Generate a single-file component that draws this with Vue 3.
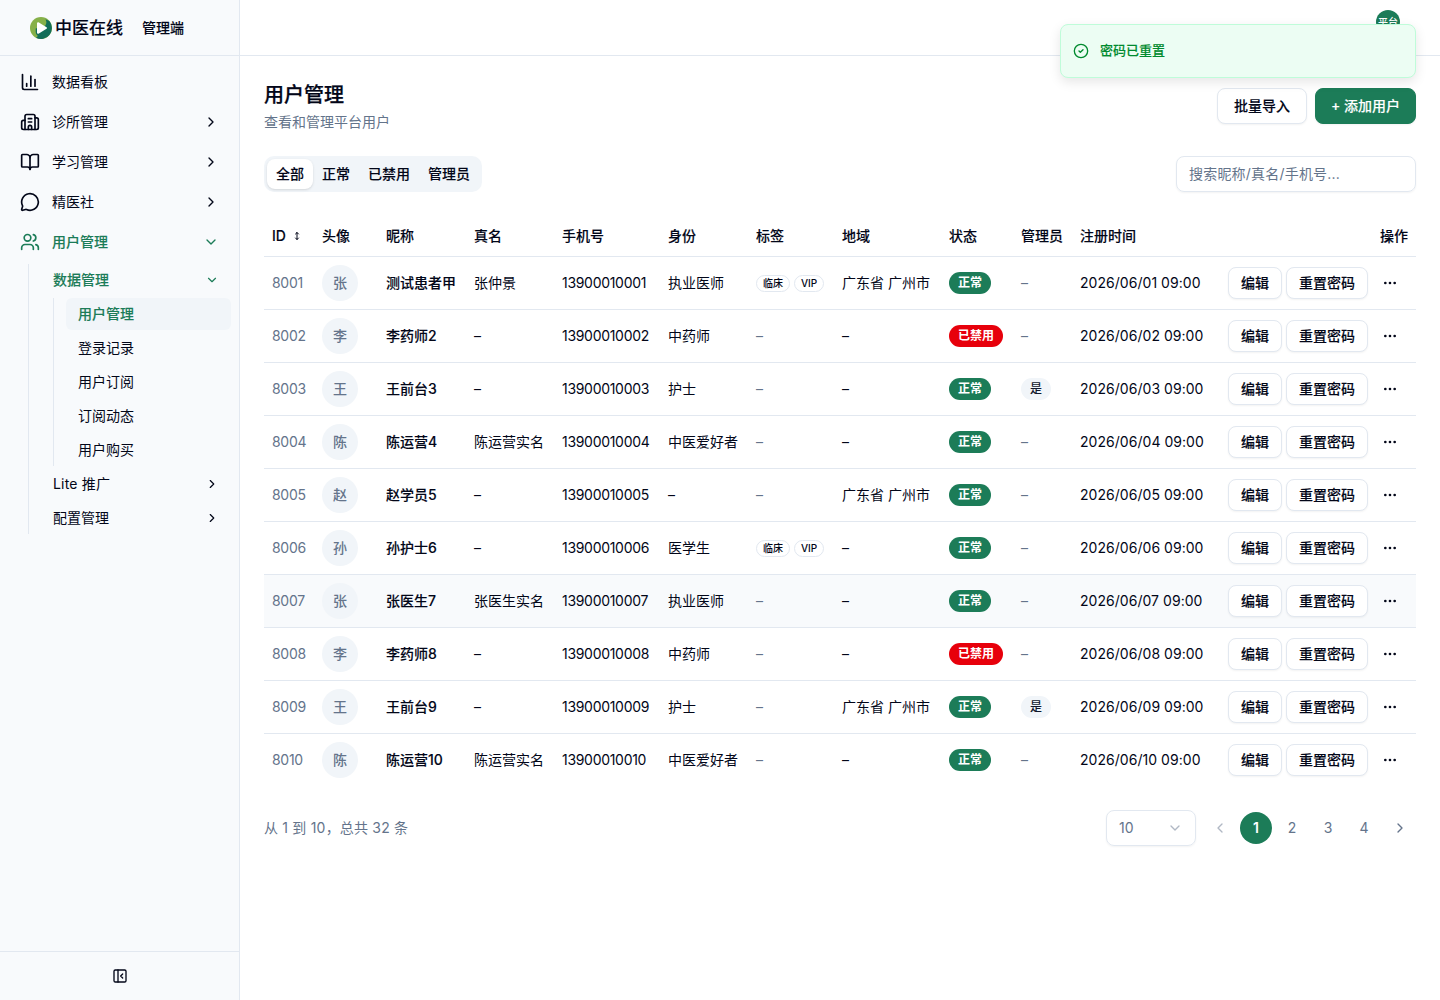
<script setup>
const menu = [
  { label: '数据看板', icon: 'chart' },
  { label: '诊所管理', icon: 'clinic', more: true },
  { label: '学习管理', icon: 'book', more: true },
  { label: '精医社', icon: 'chat', more: true },
]
const leaves = ['用户管理', '登录记录', '用户订阅', '订阅动态', '用户购买']
const icons = {
  chart: ['M3 3v16a2 2 0 0 0 2 2h16', 'M18 17V9', 'M13 17V5', 'M8 17v-3'],
  clinic: ['M10 12h4', 'M10 8h4', 'M14 21v-3a2 2 0 0 0-4 0v3', 'M6 10H4a2 2 0 0 0-2 2v7a2 2 0 0 0 2 2h16a2 2 0 0 0 2-2V9a2 2 0 0 0-2-2h-2', 'M6 21V5a2 2 0 0 1 2-2h8a2 2 0 0 1 2 2v16'],
  book: ['M12 7v14', 'M3 18a1 1 0 0 1-1-1V4a1 1 0 0 1 1-1h5a4 4 0 0 1 4 4 4 4 0 0 1 4-4h5a1 1 0 0 1 1 1v13a1 1 0 0 1-1 1h-6a3 3 0 0 0-3 3 3 3 0 0 0-3-3z'],
  chat: ['M2.992 16.342a2 2 0 0 1 .094 1.167l-1.065 3.29a1 1 0 0 0 1.236 1.168l3.413-.998a2 2 0 0 1 1.099.092 10 10 0 1 0-4.777-4.719'],
}
const tabs = ['全部', '正常', '已禁用', '管理员']
const heads = ['头像', '昵称', '真名', '手机号', '身份', '标签', '地域', '状态', '管理员', '注册时间']
const area = '广东省 广州市'
const rows = [
  { s: '张', name: '测试患者甲', real: '张仲景', job: '执业医师', tags: ['临床', 'VIP'], area },
  { s: '李', name: '李药师2', job: '中药师', banned: true },
  { s: '王', name: '王前台3', job: '护士', admin: true },
  { s: '陈', name: '陈运营4', real: '陈运营实名', job: '中医爱好者' },
  { s: '赵', name: '赵学员5', area },
  { s: '孙', name: '孙护士6', job: '医学生', tags: ['临床', 'VIP'] },
  { s: '张', name: '张医生7', real: '张医生实名', job: '执业医师', hover: true },
  { s: '李', name: '李药师8', job: '中药师', banned: true },
  { s: '王', name: '王前台9', job: '护士', area, admin: true },
  { s: '陈', name: '陈运营10', real: '陈运营实名', job: '中医爱好者' },
].map((r, i) => {
  const n = String(i + 1).padStart(2, '0')
  return { ...r, id: 8001 + i, phone: `139000100${n}`, date: `2026/06/${n} 09:00` }
})
</script>

<template>
  <div class="shell">
    <aside class="sidebar">
      <div class="brand">
        <svg class="logo" viewBox="0 0 22 22">
          <circle cx="11" cy="11" r="11" fill="#86b049" />
          <path d="M15.5 2.2Q18 3 19.6 4.2A11 11 0 0 1 6 20.8Q8 20 7.5 18.5Q5.7 17.5 5.7 15V11.5L15 9Q17.5 6 15.5 2.2Z" fill="#136e59" />
          <path d="M8 6.2v9.6l8-4.8z" fill="#fff" stroke="#fff" stroke-width="2" stroke-linejoin="round" />
        </svg>
        <span class="brand-name">中医在线</span>
        <span class="brand-sub">管理端</span>
      </div>
      <nav class="nav">
        <div v-for="m in menu" :key="m.label" class="item">
          <svg class="ico" viewBox="0 0 24 24"><path v-for="d in icons[m.icon]" :key="d" :d="d" /></svg>
          <span class="grow">{{ m.label }}</span>
          <svg v-if="m.more" class="chev" viewBox="0 0 24 24"><path d="m9 18 6-6-6-6" /></svg>
        </div>
        <div class="item green">
          <svg class="ico" viewBox="0 0 24 24">
            <path d="M16 21v-2a4 4 0 0 0-4-4H6a4 4 0 0 0-4 4v2" /><circle cx="9" cy="7" r="4" />
            <path d="M22 21v-2a4 4 0 0 0-3-3.87" /><path d="M16 3.13a4 4 0 0 1 0 7.75" />
          </svg>
          <span class="grow">用户管理</span>
          <svg class="chev" viewBox="0 0 24 24"><path d="m6 9 6 6 6-6" /></svg>
        </div>
        <div class="branch">
          <div class="sub green">
            <span class="grow">数据管理</span>
            <svg class="chev" viewBox="0 0 24 24"><path d="m6 9 6 6 6-6" /></svg>
          </div>
          <div class="leaves">
            <div v-for="(l, i) in leaves" :key="l" class="leaf" :class="{ on: i === 0 }">{{ l }}</div>
          </div>
          <div v-for="l in ['Lite 推广', '配置管理']" :key="l" class="sub" :class="{ latin: l[0] === 'L' }">
            <span class="grow">{{ l }}</span>
            <svg class="chev" viewBox="0 0 24 24"><path d="m9 18 6-6-6-6" /></svg>
          </div>
        </div>
      </nav>
      <div class="side-foot">
        <svg class="collapse" viewBox="0 0 24 24"><rect width="18" height="18" x="3" y="3" rx="2" /><path d="M9 3v18" /><path d="m16 15-3-3 3-3" /></svg>
      </div>
    </aside>

    <div class="main">
      <header class="top"><span class="me">平台</span></header>
      <main class="content">
        <div class="title-row">
          <div>
            <h1>用户管理</h1>
            <p class="desc">查看和管理平台用户</p>
          </div>
          <div class="actions">
            <button class="btn lg">批量导入</button>
            <button class="btn lg primary">+ 添加用户</button>
          </div>
        </div>
        <div class="filters">
          <div class="tabs">
            <span v-for="(t, i) in tabs" :key="t" class="tab" :class="{ on: i === 0 }">{{ t }}</span>
          </div>
          <div class="search">搜索昵称/真名/手机号...</div>
        </div>

        <table>
          <colgroup>
            <col class="c-id" /><col class="c-av" /><col class="c-nm" /><col class="c-nm" /><col class="c-ph" /><col class="c-nm" />
            <col class="c-tg" /><col class="c-ar" /><col class="c-st" /><col class="c-ad" /><col class="c-dt" /><col />
          </colgroup>
          <thead>
            <tr>
              <th>ID <svg class="sort" viewBox="0 0 6 10"><path d="M3 1.5v7M1.5 3 3 1.5 4.5 3M1.5 7 3 8.5 4.5 7" /></svg></th>
              <th v-for="h in heads" :key="h">{{ h }}</th>
              <th class="right">操作</th>
            </tr>
          </thead>
          <tbody>
            <tr v-for="r in rows" :key="r.id" :class="{ hover: r.hover }">
              <td class="muted num">{{ r.id }}</td>
              <td><span class="avatar">{{ r.s }}</span></td>
              <td class="name">{{ r.name }}</td>
              <td>{{ r.real || '–' }}</td>
              <td class="num">{{ r.phone }}</td>
              <td>{{ r.job || '–' }}</td>
              <td class="muted">
                <div v-if="r.tags" class="tags"><span v-for="t in r.tags" :key="t" class="tag">{{ t }}</span></div>
                <template v-else>–</template>
              </td>
              <td>{{ r.area || '–' }}</td>
              <td><span class="badge" :class="{ red: r.banned }">{{ r.banned ? '已禁用' : '正常' }}</span></td>
              <td class="muted"><span v-if="r.admin" class="badge soft">是</span><template v-else>–</template></td>
              <td class="date">{{ r.date }}</td>
              <td>
                <div class="ops">
                  <button class="btn">编辑</button><button class="btn">重置密码</button>
                  <span class="dots"><svg viewBox="0 0 24 24"><circle cx="5" cy="12" r="1" /><circle cx="12" cy="12" r="1" /><circle cx="19" cy="12" r="1" /></svg></span>
                </div>
              </td>
            </tr>
          </tbody>
        </table>

        <div class="pager">
          <span class="total">从 1 到 10，总共 32 条</span>
          <div class="pages">
            <div class="size"><span>10</span><svg class="chev" viewBox="0 0 24 24"><path d="m6 9 6 6 6-6" /></svg></div>
            <span class="pg off"><svg class="chev" viewBox="0 0 24 24"><path d="m15 18-6-6 6-6" /></svg></span>
            <span class="pg cur">1</span><span class="pg">2</span><span class="pg">3</span><span class="pg">4</span>
            <span class="pg"><svg class="chev" viewBox="0 0 24 24"><path d="m9 18 6-6-6-6" /></svg></span>
          </div>
        </div>
      </main>
    </div>

    <div class="toast">
      <svg viewBox="0 0 24 24"><circle cx="12" cy="12" r="10" /><path d="m9 12 2 2 4-4" /></svg>
      <span>密码已重置</span>
    </div>
  </div>
</template>

<style>
body { margin: 0; background: #fff; }
</style>

<style scoped>
* { box-sizing: border-box; }
.shell { display: flex; height: 1000px; overflow: hidden; position: relative; font: 400 14px/20px Inter, "Noto Sans CJK SC", sans-serif; color: #020618; }
svg { fill: none; stroke: currentColor; stroke-width: 2; stroke-linecap: round; stroke-linejoin: round; flex: none; display: block; }
.sidebar { width: 240px; flex: none; display: flex; flex-direction: column; background: #f8fafc; border-right: 1px solid #e2e8f0; }
.brand { height: 56px; flex: none; display: flex; align-items: center; border-bottom: 1px solid #e2e8f0; padding-left: 30px; }
.logo { width: 22px; height: 22px; stroke: none; }
.brand-name { font-size: 17px; font-weight: 500; margin-left: 3px; width: 68px; white-space: nowrap; }
.brand-sub { font-weight: 500; margin-left: 19px; }
.nav { flex: 1; padding: 8px 8px 0; }
.item { height: 36px; margin-bottom: 4px; display: flex; align-items: center; padding: 0 12px; gap: 12px; }
.ico { width: 20px; height: 20px; }
.grow { flex: 1; }
.chev { width: 16px; height: 16px; }
.green { color: #1c7c58; font-weight: 500; }
.branch { margin: 0 0 0 20px; border-left: 1px solid #e2e8f0; padding-left: 12px; }
.sub { height: 32px; margin-bottom: 2px; display: flex; align-items: center; padding: 0 12px; }
.sub.latin { letter-spacing: .2px; }
.sub .chev { width: 14px; height: 14px; }
.leaves { margin: 0 0 0 12px; border-left: 1px solid #e2e8f0; padding-left: 12px; }
.leaf { height: 32px; margin-bottom: 2px; padding: 6px 12px; border-radius: 6px; }
.leaf.on { background: #f1f5f9; color: #1c7c58; font-weight: 500; }
.side-foot { height: 49px; border-top: 1px solid #e2e8f0; display: flex; align-items: center; justify-content: center; }
.collapse { width: 16px; height: 16px; }
.main { flex: 1; min-width: 0; }
.top { height: 56px; border-bottom: 1px solid #e2e8f0; display: flex; justify-content: flex-end; padding: 10px 40px 0 0; }
.me { width: 24px; height: 24px; border-radius: 50%; background: #1c7c58; color: #fff; font-size: 10px; line-height: 24px; text-align: center; font-weight: 500; }
.content { padding: 24px; }
.title-row, .filters, .pager { display: flex; justify-content: space-between; align-items: center; }
.title-row { height: 52px; }
h1 { margin: 0; font-size: 20px; line-height: 28px; padding-top: 1px; margin-bottom: -1px; font-weight: 500; }
.desc { margin: 4px 0 0; color: #64748b; line-height: 20px; }
.actions { display: flex; gap: 8px; }
.btn { font: inherit; font-weight: 500; color: inherit; height: 32px; padding: 0 12px; border: 1px solid #e2e8f0; border-radius: 8px; background: #fff; box-shadow: 0 1px 2px rgba(0, 0, 0, .05); white-space: nowrap; }
.btn.lg { height: 36px; padding: 0 16px; }
.btn.lg.primary { background: #1c7c58; border-color: #1c7c58; color: #fff; padding: 0 15px; }
.brand-name, .brand-sub, .green span, .leaf.on, h1, .btn, .tabs, th, .name, .toast span { -webkit-text-stroke: .12px currentColor; }
h1 { -webkit-text-stroke-width: .25px; }
.filters { margin-top: 24px; height: 36px; }
.tabs { display: flex; height: 36px; padding: 3px; border-radius: 10px; background: #f1f5f9; font-weight: 500; }
.tab { padding: 5px 9px; border-radius: 8px; }
.tab.on { background: #fff; box-shadow: 0 1px 3px rgba(0, 0, 0, .1), 0 1px 2px -1px rgba(0, 0, 0, .1); }
.search { width: 240px; height: 36px; border: 1px solid #e2e8f0; border-radius: 8px; box-shadow: 0 1px 2px rgba(0, 0, 0, .05); padding: 7px 12px; color: #64748b; letter-spacing: .2px; }
table { margin-top: 24px; width: 100%; table-layout: fixed; border-collapse: separate; border-spacing: 0; }
.c-id { width: 50px; } .c-av { width: 64px; } .c-nm { width: 88px; } .c-ph { width: 106px; } .c-tg { width: 86px; }
.c-ar { width: 107px; } .c-st { width: 72px; } .c-ad { width: 59px; } .c-dt { width: 148px; }
th, td { padding: 0 8px; text-align: left; white-space: nowrap; border-bottom: 1px solid #e2e8f0; }
th { height: 41px; font-weight: 500; }
td { height: 53px; }
tbody tr:last-child td { border-bottom: 0; height: 52px; }
.hover td { background: #f8fafc; }
.right { text-align: right; }
.muted { color: #64748b; }
.num { letter-spacing: -.3px; }
.date { letter-spacing: .04px; }
.name { font-weight: 500; }
.sort { display: inline-block; width: 6px; height: 10px; stroke-width: 1; margin-left: 4px; }
.avatar { display: block; width: 36px; height: 36px; line-height: 36px; border-radius: 50%; background: #f1f5f9; color: #64748b; text-align: center; font-weight: 500; }
.tags { display: flex; gap: 4px; }
.tag { height: 17px; border: 1px solid #e2e8f0; border-radius: 9px; padding: 0 6px; font-size: 10px; line-height: 15px; color: #020618; font-weight: 500; }
.badge { display: inline-block; vertical-align: middle; height: 22px; border-radius: 11px; padding: 0 9px; font-size: 12px; line-height: 22px; font-weight: 600; color: #fff; background: #1c7c58; }
.badge.red { background: #e7000b; }
.badge.soft { background: #f1f5f9; color: #0f172b; font-weight: 500; }
.ops { display: flex; justify-content: flex-end; align-items: center; gap: 4px; }
.dots { width: 36px; display: flex; justify-content: center; }
.dots svg { width: 16px; height: 16px; }
.pager { margin-top: 24px; height: 36px; color: #64748b; }
.total { letter-spacing: .2px; }
.pages { display: flex; align-items: center; gap: 4px; }
.size { width: 90px; height: 36px; border: 1px solid #e2e8f0; border-radius: 8px; box-shadow: 0 1px 2px rgba(0, 0, 0, .05); display: flex; align-items: center; justify-content: space-between; padding: 0 12px; margin-right: 4px; }
.size .chev { opacity: .5; }
.pg { width: 32px; height: 32px; border-radius: 50%; display: flex; align-items: center; justify-content: center; }
.pg.off { opacity: .5; }
.pg.cur { background: #1c7c58; color: #fff; font-weight: 600; }
.toast { position: absolute; top: 24px; right: 24px; width: 356px; height: 54px; border: 1px solid #bffcd9; border-radius: 8px; background: #ecfdf3; box-shadow: 0 4px 12px rgba(0, 0, 0, .1); color: #008a2e; display: flex; align-items: center; padding-left: 12px; gap: 11px; font-size: 13px; font-weight: 500; }
.toast svg { width: 16px; height: 16px; }
.toast span { padding-bottom: 2px; }
</style>
